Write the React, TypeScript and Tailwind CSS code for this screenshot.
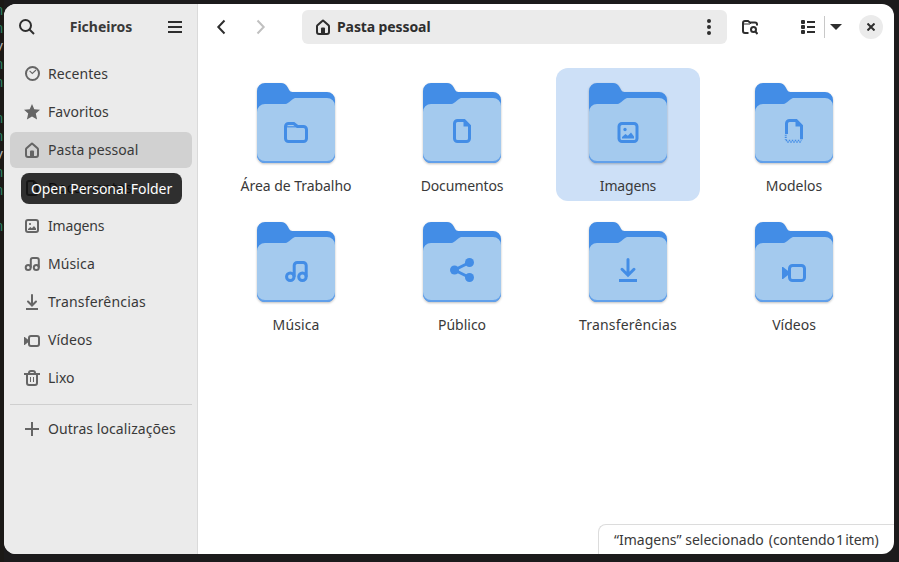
import type { ReactNode } from "react";

type IconName =
  | "recent" | "star" | "home" | "document" | "image" | "music" | "download"
  | "video" | "trash" | "plus" | "folder" | "share" | "template";

const stroke = { fill: "none", stroke: "currentColor", strokeWidth: 2 } as const;

const GLYPHS: Record<IconName, ReactNode> = {
  recent: (
    <>
      <circle cx="8.5" cy="7.5" r="6.5" {...stroke} />
      <path d="M5.600 4.900 8.300 7.400 12 4" fill="none" stroke="currentColor" strokeWidth="1.1" />
    </>
  ),
  star: <path fill="currentColor" d="M8 0l2.300 5.200 5.700.6-4.200 3.800 1.300 5.900L8 12.500l-5.100 3 1.300-5.900L0 5.800l5.700-.6z" />,
  home: (
    <>
      <path d="M2 7.400a1.500 1.500 0 0 1 .5-1.100L7.300 1.900a1 1 0 0 1 1.400 0l4.800 4.400a1.500 1.500 0 0 1 .5 1.100V13a2 2 0 0 1-2 2H4a2 2 0 0 1-2-2z" {...stroke} />
      <path d="M6 15V9.500a1 1 0 0 1 1-1h2a1 1 0 0 1 1 1V15z" fill="currentColor" />
    </>
  ),
  document: (
    <>
      <path d="M9.500 1H5a2 2 0 0 0-2 2v10a2 2 0 0 0 2 2h6a2 2 0 0 0 2-2V4.500z" {...stroke} />
      <path d="M9 1v4h5l-4-4z" fill="currentColor" />
    </>
  ),
  image: (
    <>
      <rect x="2" y="2" width="12" height="12" rx="2" {...stroke} />
      <circle cx="6" cy="6" r="1.1" fill="currentColor" />
      <path d="M4 12v-1l2.300-2 1.600 1.200L10 8l2 2.600V12z" fill="currentColor" />
    </>
  ),
  music: (
    <>
      <circle cx="4.2" cy="11.5" r="2.5" {...stroke} />
      <circle cx="12.3" cy="11.5" r="2.5" {...stroke} />
      <path d="M6.800 11.500V4a2 2 0 0 1 2-2h4a2 2 0 0 1 2 2v7.500" {...stroke} />
    </>
  ),
  download: (
    <>
      <path d="M8 1v10M4 7.500l4 4 4-4" {...stroke} strokeLinecap="round" />
      <path d="M2 15h12" {...stroke} />
    </>
  ),
  video: (
    <>
      <rect x="5" y="4" width="10" height="10" rx="2" {...stroke} />
      <path d="M0 5h.7L4.500 8v2L.7 13H0z" fill="currentColor" />
    </>
  ),
  trash: (
    <>
      <path d="M3 5v8a2 2 0 0 0 2 2h6a2 2 0 0 0 2-2V5M5 4V3a2 2 0 0 1 2-2h2a2 2 0 0 1 2 2v1" {...stroke} />
      <path d="M0 4h16" {...stroke} />
      <path d="M6.500 7v5M9.500 7v5" fill="none" stroke="currentColor" />
    </>
  ),
  plus: <path d="M8 1v14M1 8h14" {...stroke} />,
  folder: (
    <>
      <path d="M3 2h3.500L9 4h4a2 2 0 0 1 2 2v6a2 2 0 0 1-2 2H3a2 2 0 0 1-2-2V4a2 2 0 0 1 2-2z" {...stroke} />
      <path d="M2 4.200h7" fill="none" stroke="currentColor" strokeWidth=".8" />
    </>
  ),
  share: (
    <>
      <path d="M13 3 3 8l10 5" {...stroke} />
      <circle cx="13" cy="3" r="3" fill="currentColor" />
      <circle cx="3" cy="8" r="3" fill="currentColor" />
      <circle cx="13" cy="13" r="3" fill="currentColor" />
    </>
  ),
  template: (
    <>
      <path d="M3 10V3a2 2 0 0 1 2-2h4.500L13 4.500V13.500" {...stroke} />
      <path d="M9 1v4h5l-4-4z" fill="currentColor" />
      <path d="M2.500 10.500v3.300" {...stroke} strokeWidth={1.3} strokeDasharray=".7 .7" />
      <path d="M2.500 14.300H13" {...stroke} strokeWidth={1} strokeDasharray="1 1" />
      <path d="M3.500 15.300H12.500" {...stroke} strokeWidth={1} strokeDasharray="1 1" />
    </>
  ),
};

function Glyph({ name, className = "" }: { name: IconName; className?: string }) {
  return (
    <svg viewBox="0 0 16 16" className={`size-4 shrink-0 ${className}`}>
      {GLYPHS[name]}
    </svg>
  );
}

type Place = { icon: IconName; label: string; active?: boolean; tracking?: string };

const PLACES: Place[] = [
  { icon: "recent", label: "Recentes", tracking: "tracking-[0.06px]" },
  { icon: "star", label: "Favoritos", tracking: "tracking-[0.06px]" },
  { icon: "home", label: "Pasta pessoal", active: true, tracking: "tracking-[0.08px]" },
  { icon: "document", label: "Documentos" },
  { icon: "image", label: "Imagens", tracking: "tracking-[-0.18px]" },
  { icon: "music", label: "Música", tracking: "tracking-[0.1px]" },
  { icon: "download", label: "Transferências", tracking: "tracking-[0.17px]" },
  { icon: "video", label: "Vídeos", tracking: "tracking-[0.1px]" },
  { icon: "trash", label: "Lixo" },
];

type Folder = { icon: IconName; label: string; drop: number; selected?: boolean; tracking?: string };

const FOLDERS: Folder[] = [
  { icon: "folder", label: "Área de Trabalho", drop: 1, tracking: "tracking-[-0.05px]" },
  { icon: "document", label: "Documentos", drop: 0, tracking: "tracking-[-0.12px]" },
  { icon: "image", label: "Imagens", drop: 1, selected: true, tracking: "tracking-[-0.18px]" },
  { icon: "template", label: "Modelos", drop: 0 },
  { icon: "music", label: "Música", drop: 1, tracking: "tracking-[0.1px]" },
  { icon: "share", label: "Público", drop: 0 },
  { icon: "download", label: "Transferências", drop: 0, tracking: "tracking-[0.17px]" },
  { icon: "video", label: "Vídeos", drop: 1 },
];

function PlaceRow({ icon, label, active = false, tracking = "" }: Place) {
  return (
    <div className={`flex h-9 shrink-0 items-center gap-2 rounded-md pl-3.5 ${active ? "bg-[#d1d1d1]" : ""}`}>
      <Glyph name={icon} className="text-[#656565]" />
      <span className={tracking}>{label}</span>
    </div>
  );
}

function FolderIcon({ icon, drop }: { icon: IconName; drop: number }) {
  return (
    <svg viewBox="0 0 96 96" className="size-24 shrink-0 drop-shadow-[0_1px_1px_rgba(0,0,0,0.25)]">
      <path
        fill="#438de6"
        d="M9 17a8 8 0 0 1 8-8h16c3 0 5 1.300 6.500 4l1.500 2.800c.9 1.600 1.800 2.200 3.500 2.200H79a8 8 0 0 1 8 8v55a8 8 0 0 1-8 8H17a8 8 0 0 1-8-8z"
      />
      <path fill="#62a0ea" d="M9 78h78v3a8 8 0 0 1-8 8H17a8 8 0 0 1-8-8z" />
      <path
        fill="#a4caee"
        d="M9 38a8 8 0 0 1 8-8h19c2 0 3.500-.4 5-1.800l3-2.500C45.500 24.400 47 24 49 24h30a8 8 0 0 1 8 8v47a8 8 0 0 1-8 8H17a8 8 0 0 1-8-8z"
      />
      <g color="#438de6" transform={`translate(36 ${45 + drop * 1.5}) scale(1.5)`}>
        {GLYPHS[icon]}
      </g>
    </svg>
  );
}

function Sidebar() {
  return (
    <aside className="relative flex w-[194px] shrink-0 flex-col border-r border-[#dadada] bg-[#ebebeb]">
      <header className="flex h-[46px] shrink-0 items-center justify-between pl-[15px] pr-[14px]">
        <svg viewBox="0 0 16 16" className="size-4 text-[#2e2e2e]">
          <circle cx="6.500" cy="6.500" r="5.500" {...stroke} />
          <path d="m10.500 10.500 4.500 4.500" {...stroke} />
        </svg>
        <h1 className="text-[14px] font-bold">Ficheiros</h1>
        <svg viewBox="0 0 16 16" className="size-4 text-[#2e2e2e]">
          <path d="M1 3h14M1 8h14M1 13h14" {...stroke} />
        </svg>
      </header>
      <nav className="flex flex-col gap-0.5 pl-1.5 pr-[5px] pt-1.5">
        {PLACES.map((p) => (
          <PlaceRow key={p.label} {...p} />
        ))}
        <hr className="mb-1 mt-1.5 border-[#cfcfcf]" />
        <PlaceRow icon="plus" label="Outras localizações" tracking="tracking-[0.07px]" />
      </nav>
      <div className="absolute left-[17px] top-[169px] flex h-[31px] w-[161px] items-center justify-center whitespace-nowrap rounded-lg bg-black/80 tracking-[-0.06px] text-white">
        Open Personal Folder
      </div>
    </aside>
  );
}

function Toolbar() {
  return (
    <header className="flex h-[46px] shrink-0 items-center pl-[15px] pr-[11px] text-[#2e2e2e]">
      <svg viewBox="0 0 16 16" className="size-4">
        <path d="M11.500 1.500 5.300 8l6.200 6.500" {...stroke} />
      </svg>
      <svg viewBox="0 0 16 16" className="ml-6 size-4 text-[#c0c0c0]">
        <path d="M4.500 1.500 10.700 8l-6.200 6.500" {...stroke} />
      </svg>
      <div className="ml-[33px] flex h-[34px] w-[425px] items-center rounded-md bg-[#ebebeb] pl-[13px] pr-2.5">
        <Glyph name="home" />
        <span className="ml-1.5 flex-1 text-[14px] font-bold tracking-[-0.1px]">Pasta pessoal</span>
        <svg viewBox="0 0 16 16" className="size-4" fill="currentColor">
          <circle cx="8" cy="2" r="2" />
          <circle cx="8" cy="8" r="2" />
          <circle cx="8" cy="14" r="2" />
        </svg>
      </div>
      <svg viewBox="0 0 16 16" className="ml-[15px] size-4">
        <path d="M6.500 14H3a2 2 0 0 1-2-2V4a2 2 0 0 1 2-2h3l2 1.500h5a2 2 0 0 1 2 2v1" {...stroke} />
        <path d="M2 5h6l1-1" fill="none" stroke="currentColor" />
        <circle cx="11.500" cy="10.500" r="2.500" {...stroke} />
        <path d="m13 12 2.500 3" {...stroke} />
      </svg>
      <svg viewBox="0 0 16 16" className="ml-[42px] size-4">
        <path d="M7 3h8M7 8h8M7 13h8" {...stroke} />
        <g fill="currentColor">
          <rect x="1" y="1" width="4" height="4" rx="1" />
          <rect x="1" y="6" width="4" height="4" rx="1" />
          <rect x="1" y="11" width="4" height="4" rx="1" />
        </g>
      </svg>
      <div className="ml-2 h-[22px] w-px bg-[#c8c8c8]" />
      <svg viewBox="0 0 12 6" className="ml-[5px] h-1.5 w-3">
        <path d="M0 0h12L6 6z" fill="currentColor" />
      </svg>
      <div className="ml-[17px] flex size-6 items-center justify-center rounded-full bg-[#ebebeb]">
        <svg viewBox="0 0 8 8" className="size-2">
          <path d="m.5.5 7 7m0-7-7 7" {...stroke} />
        </svg>
      </div>
    </header>
  );
}

/* Slice of the terminal that shows to the left of the window. */
function TerminalEdge() {
  return (
    <div className="flex w-1 shrink-0 flex-col overflow-hidden bg-[#1b1916] pt-[2px] font-['Liberation_Mono',monospace] text-[14px] leading-[18px] text-[#2a7f62]">
      {["n", "n", "v", "n", "n", "", "n", "n", "v", "n", "n", "", "n"].map((c, i) => (
        <div key={i} className={`-ml-[5px] h-[18px] shrink-0 ${c === "v" ? "text-[#b0b0b0]" : ""}`}>
          {c}
        </div>
      ))}
    </div>
  );
}

export default function App() {
  return (
    <div className="flex h-[562px] w-[899px] overflow-hidden bg-[#1c1b1c] font-['Noto_Sans',sans-serif] text-[14px] leading-5 text-[#393939]">
      <TerminalEdge />
      <div className="mt-1 flex h-[550px] w-[890px] overflow-hidden rounded-xl bg-white">
        <Sidebar />
        <main className="flex min-w-0 flex-1 flex-col">
          <Toolbar />
          <section className="grid grid-cols-[repeat(4,144px)] gap-x-[22px] gap-y-1.5 pl-[26px] pt-[18px]">
            {FOLDERS.map((f) => (
              <div
                key={f.label}
                className={`flex h-[133px] flex-col items-center rounded-xl pt-1.5 ${f.selected ? "bg-[#cde0f7]" : ""}`}
              >
                <FolderIcon icon={f.icon} drop={f.drop} />
                <span className={`mt-1.5 whitespace-nowrap ${f.tracking ?? ""}`}>{f.label}</span>
              </div>
            ))}
          </section>
          <footer className="ml-auto mt-auto flex h-[30px] w-[296px] items-center gap-[5px] whitespace-nowrap rounded-tl-lg border-l border-t border-[#dcdcdc] pl-[15px]">
            <span>“Imagens” selecionado</span>
            <span className="tracking-[-0.05px] [word-spacing:-2.5px]">(contendo 1 item)</span>
          </footer>
        </main>
      </div>
    </div>
  );
}
